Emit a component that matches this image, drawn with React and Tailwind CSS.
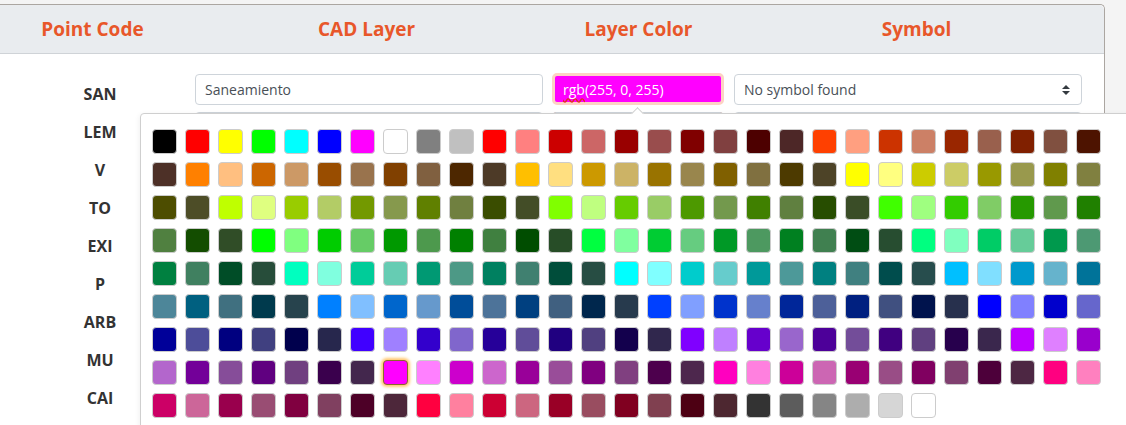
import React from 'react'

// AutoCAD colour index palette (0 shown as black)
function hsv(h, s, v) {
  const c = v * s
  const x = c * (1 - Math.abs(((h / 60) % 2) - 1))
  const m = v - c
  let r = 0, g = 0, b = 0
  if (h < 60) { r = c; g = x }
  else if (h < 120) { r = x; g = c }
  else if (h < 180) { g = c; b = x }
  else if (h < 240) { g = x; b = c }
  else if (h < 300) { r = x; b = c }
  else { r = c; b = x }
  const hex = n => Math.round(n + m).toString(16).padStart(2, '0')
  return `#${hex(r)}${hex(g)}${hex(b)}`
}

function buildPalette() {
  const out = ['#000000', '#ff0000', '#ffff00', '#00ff00', '#00ffff', '#0000ff', '#ff00ff', '#ffffff', '#808080', '#c0c0c0']
  const vals = [255, 255, 204, 204, 153, 153, 128, 128, 77, 77]
  for (let i = 10; i < 250; i++) {
    const k = i - 10
    const hue = Math.floor(k / 10) * 15
    const off = k % 10
    out.push(hsv(hue, off % 2 ? 0.5 : 1, vals[off]))
  }
  return out.concat(['#333333', '#5c5c5c', '#858585', '#adadad', '#d6d6d6', '#ffffff'])
}

const palette = buildPalette()

const rows = [
  { code: 'SAN', layer: 'Saneamiento', color: '#ff00ff' },
  { code: 'LEM', layer: 'Lemas', color: '#b5391b' },
  { code: 'V', layer: 'Viales', color: '#808080' },
  { code: 'TO', layer: 'Topografia', color: '#00a000' },
  { code: 'EXI', layer: 'Existente', color: '#0000ff' },
  { code: 'P', layer: 'Puntos', color: '#ff0000' },
  { code: 'ARB', layer: 'Arbolado', color: '#008000' },
  { code: 'MU', layer: 'Muros', color: '#994c4c' },
  { code: 'CAI', layer: 'Caidas', color: '#333333' },
]

function SortArrows() {
  return (
    <svg width="8" height="10" viewBox="0 0 8 10" className="shrink-0">
      <path d="M4 0 L8 4 L0 4 Z" fill="#343a40" />
      <path d="M0 6 L8 6 L4 10 Z" fill="#343a40" />
    </svg>
  )
}

export default function App() {
  return (
    <div className="relative h-[425px] overflow-hidden bg-[#f4f4f4] pt-[4px] font-['Open_Sans',sans-serif]">
      <div className="w-[1105px] bg-white border-t border-r border-[#aba6a1] rounded-tr-[5px] h-[430px]">
        {/* header */}
        <div className="flex h-[49px] items-center bg-[#e9ecef] border-b border-[#cfd3d7] rounded-tr-[5px] text-[19px] font-bold text-[#e8572a]">
          <div className="w-[185px] text-center">Point Code</div>
          <div className="w-[363px] text-center">CAD Layer</div>
          <div className="w-[181px] text-center">Layer Color</div>
          <div className="flex-1 text-center">Symbol</div>
        </div>

        {/* rows */}
        <div className="pt-[20px]">
          {rows.map((r, i) => (
            <div key={r.code} className="flex h-[38px] items-start">
              <div className="w-[185px] pl-[15px] pt-[10px] text-center text-[16px] leading-[20px] font-bold text-[#333]">
                {r.code}
              </div>
              <div className="ml-[10px] w-[348px] h-[31px] flex items-center border border-[#ced4da] rounded-[4px] px-[9px] text-[14px] text-[#495057]">
                {r.layer}
              </div>
              {i === 0 ? (
                <div className="ml-[9px] mt-[-1px] w-[172px] h-[32px] flex items-center bg-[#ff00ff] border-[3px] border-[#fdd3c4] rounded-[5px] pl-[8px] text-[14px] font-medium text-white">
                  <span className="underline decoration-wavy decoration-[#e0301e] underline-offset-[3px]">rgb</span>(255, 0, 255)
                </div>
              ) : (
                <div
                  className="ml-[9px] w-[172px] h-[31px] rounded-[4px] border border-[#ced4da]"
                  style={{ backgroundColor: r.color }}
                />
              )}
              <div className="ml-[10px] w-[348px] h-[31px] flex items-center justify-between border border-[#ced4da] rounded-[4px] pl-[9px] pr-[11px] text-[14px] text-[#495057]">
                <span>No symbol found</span>
                <SortArrows />
              </div>
            </div>
          ))}
        </div>
      </div>

      {/* colour picker popup */}
      <div className="absolute left-[140px] top-[113px] w-[1000px] h-[330px] bg-white border border-[#cfcfcf] rounded-[4px] shadow-[0_2px_6px_rgba(0,0,0,0.08)] pt-[11px] px-[7px]">
        <div className="absolute left-[492px] top-[-5px] w-[9px] h-[9px] rotate-45 bg-white border-l border-t border-[#cfcfcf]" />
        <div className="flex flex-wrap w-[957px]">
          {palette.map((c, i) => (
            <div
              key={i}
              className={
                i === 210
                  ? 'm-[4px] w-[25px] h-[25px] rounded-[4px] border border-[#8a6a2a] shadow-[0_0_3px_2px_#ffc870]'
                  : 'm-[4px] w-[25px] h-[25px] rounded-[4px] border border-[#cccccc]'
              }
              style={{ backgroundColor: c }}
            />
          ))}
        </div>
      </div>
    </div>
  )
}
